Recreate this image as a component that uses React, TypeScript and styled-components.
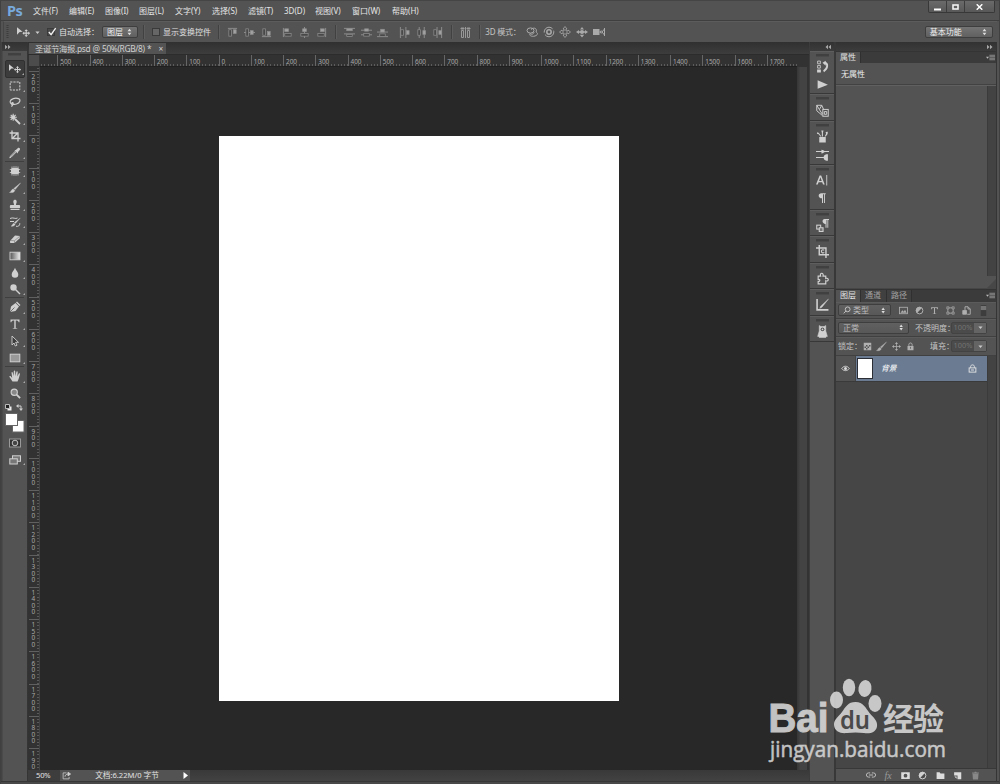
import React from "react";
import styled, { createGlobalStyle, css } from "styled-components";

const Global = createGlobalStyle`
  html, body { margin: 0; background: #535353; }
  * { box-sizing: border-box; }
  body { font-family: "Noto Sans", "Noto Sans CJK SC", sans-serif; font-size: 8px; line-height: 1; color: #dcdcdc; overflow: hidden; }
  svg { display: block; flex: none; }
`;

const Shell = styled.div`
  position: relative;
  display: flex;
  flex-direction: column;
  width: 1000px;
  height: 784px;
  background: #535353;
  border-top: 1px solid #454545;
  border-left: 1px solid #404040;
  border-right: 1px solid #404040;
  overflow: hidden;
`;

/* ---------- menu bar ---------- */
const MenuBar = styled.header`
  display: flex;
  height: 20px;
  flex: none;
  padding-left: 6px;
  align-items: center;
  border-bottom: 1px solid #3f3f3f;
`;
const Brand = styled.div`
  width: 26px;
  padding-bottom: 2px;
  color: #78a9dc;
  font: bold 14.5px/16px "Noto Sans", sans-serif;
  letter-spacing: -0.6px;
`;
const MenuItem = styled.div<{ $w: number }>`
  width: ${(p) => p.$w}px;
  white-space: nowrap;
  font-size: 8px;
  color: #e4e4e4;
`;
const WindowButtons = styled.div`
  display: flex;
  align-self: flex-start;
  margin-left: auto;
  margin-right: 4px;
  height: 12px;
  border: 1px solid #383838;
  border-top: 0;
  border-radius: 0 0 2px 2px;
  background: linear-gradient(#6a6a6a, #585858);
`;
const WindowButton = styled.div<{ $w: number }>`
  display: flex;
  align-items: center;
  justify-content: center;
  width: ${(p) => p.$w}px;
  & + & { border-left: 1px solid #3c3c3c; }
`;

/* ---------- options bar ---------- */
const OptionsBar = styled.div`
  display: flex;
  align-items: center;
  height: 21px;
  flex: none;
  border-top: 1px solid #5c5c5c;
  border-left: 1px solid #464646;
  margin: 0 2px;
  color: #e0e0e0;
`;
const Slot = styled.div<{ $w: number; $left?: boolean }>`
  display: flex;
  flex: none;
  width: ${(p) => p.$w}px;
  align-items: center;
  justify-content: ${(p) => (p.$left ? "flex-start" : "center")};
  white-space: nowrap;
`;
const ModeLabel = styled.span`
  padding-left: 1px;
  color: #c4c4c4;
  letter-spacing: -0.2px;
`;
const Divider = styled.div`
  width: 1px;
  height: 14px;
  background: #414141;
  box-shadow: 1px 0 #5d5d5d;
`;
const Check = styled.div<{ $on?: boolean }>`
  width: 8px;
  height: 8px;
  border: 1px solid #3a3a3a;
  background: ${(p) => (p.$on ? "#4a4a4a" : "#666")};
  svg { margin: -2px 0 0 -1px; }
`;
const Select = styled.div<{ $w: number; $h?: number; $dim?: boolean }>`
  display: flex;
  flex: none;
  align-items: center;
  justify-content: space-between;
  width: ${(p) => p.$w}px;
  height: ${(p) => p.$h ?? 12}px;
  padding: 0 2px 0 4px;
  border: 1px solid #3e3e3e;
  border-radius: 2px;
  background: ${(p) => (p.$dim ? "linear-gradient(#606060, #585858)" : "linear-gradient(#747474, #606060)")};
  color: ${(p) => (p.$dim ? "#bdbdbd" : "#f0f0f0")};
  white-space: nowrap;
`;
const SelectLabel = styled.span`
  display: flex;
  align-items: center;
  gap: 2px;
`;

/* ---------- work area ---------- */
const Work = styled.main`
  display: flex;
  height: 739px;
  flex: none;
`;
const ToolColumn = styled.nav`
  display: flex;
  flex-direction: column;
  width: 27px;
  border-left: 1px solid #434343;
  border-right: 1px solid #353535;
  box-shadow: inset 1px 0 #4a4a4a;
`;
const Header = styled.div<{ $right?: boolean }>`
  display: flex;
  align-items: center;
  justify-content: ${(p) => (p.$right ? "flex-end" : "flex-start")};
  height: 9px;
  flex: none;
  padding: 0 3px;
  background: linear-gradient(#323232, #3c3c3c);
`;
const Grip = styled.div`
  width: 13px;
  height: 3px;
  margin: 2px auto 0;
  flex: none;
  background: #404040;
  border-bottom: 1px solid #4a4a4a;
`;
const GripGap = styled.div`
  height: 4px;
  flex: none;
`;
const Tool = styled.div<{ $h: number; $active?: boolean }>`
  position: relative;
  display: flex;
  flex: none;
  height: ${(p) => p.$h}px;
  margin: 0 2px 0 3px;
  align-items: center;
  justify-content: center;
  ${(p) =>
    p.$active &&
    css`
      background: #3c3c3c;
      border: 1px solid #303030;
      border-radius: 2px;
    `}
`;
const Corner = styled.i`
  position: absolute;
  right: 0;
  bottom: 2px;
  border: 1px solid #aaa;
  border-top-color: transparent;
  border-left-color: transparent;
`;
const ToolRule = styled.div`
  height: 1px;
  flex: none;
  margin: 0 3px;
  background: #3f3f3f;
`;
const MiniRow = styled.div`
  display: flex;
  justify-content: space-between;
  height: 12px;
  flex: none;
  padding: 3px 4px 0 3px;
`;

/* ---------- document ---------- */
const DocColumn = styled.section`
  display: flex;
  flex-direction: column;
  width: 781px;
  background: #323232;
`;
const TabStrip = styled.div`
  display: flex;
  height: 13px;
  flex: none;
  border-bottom: 1px solid #2c2c2c;
  padding-top: 1px;
  background: linear-gradient(#303030, #3d3d3d);
`;
const DocTab = styled.div`
  display: flex;
  align-items: center;
  justify-content: space-between;
  margin-left: 1px;
  width: 137px;
  padding: 2px 3px 0 6px;
  background: #535353;
  color: #d0d0d0;
  white-space: nowrap;
  font-size: 8.4px;
  letter-spacing: -0.36px;
  word-spacing: 0.5px;
`;
const HRulerRow = styled.div`
  display: flex;
  height: 12px;
  flex: none;
  background: #323232;
`;
const RulerCorner = styled.div`
  width: 11px;
  height: 11px;
  margin-left: 1px;
  flex: none;
  background: #4c4c4c;
  border-right: 1px solid #383838;
`;
const HRuler = styled.div`
  display: flex;
  width: 757px;
  overflow: hidden;
  border-bottom: 1px solid #202020;
`;
const HCell = styled.div`
  width: 32.25px;
  flex: none;
  padding: 4px 0 0 2px;
  border-left: 1px solid #666;
  font-size: 6.4px;
  color: #a8a8a8;
  background: repeating-linear-gradient(90deg, transparent 0 2.22px, #5c5c5c 2.22px 3.22px) 0 100% / 100% 2px no-repeat;
`;
const HTrack = styled.div`
  display: flex;
  flex: none;
  margin-left: -15px;
`;
const CanvasRow = styled.div`
  display: flex;
  height: 703px;
  flex: none;
`;
const VRuler = styled.div`
  width: 12px;
  padding-left: 1px;
  overflow: hidden;
  background: #323232;
  border-right: 1px solid #424242;
`;
const VTrack = styled.div`
  margin-top: -28.5px;
`;
const VCell = styled.div`
  display: flex;
  flex-direction: column;
  height: 32.25px;
  padding: 2px 0 0 2.5px;
  border-top: 1px solid #606060;
  font-size: 6.4px;
  line-height: 6.5px;
  color: #a8a8a8;
  background: repeating-linear-gradient(180deg, transparent 0 2.22px, #5a5a5a 2.22px 3.22px) 100% 0 / 2px 100% no-repeat;
`;
const Canvas = styled.div`
  width: 757px;
  padding: 69px 0 0 179px;
  background: #282828;
`;
const Paper = styled.div`
  width: 399.5px;
  height: 565px;
  background: #fff;
`;
const VScroll = styled.div`
  flex: 1;
  background: linear-gradient(90deg, #363636, #434343 35%, #434343);
  border-right: 2px solid #333;
`;
const StatusBar = styled.footer`
  display: flex;
  height: 11px;
  flex: none;
  background: linear-gradient(#393939, #424242);
  color: #e2e2e2;
  font-size: 7.6px;
`;
const Zoom = styled.div`
  width: 32px;
  padding: 2px 0 0 8px;
  background: #3d3d3d;
  font-size: 7.6px;
  letter-spacing: -0.2px;
`;
const DocInfo = styled.div`
  display: flex;
  align-items: center;
  justify-content: space-between;
  width: 130px;
  padding: 0 2px 0 2px;
  background: #535353;
  white-space: nowrap;
`;

/* ---------- icon dock ---------- */
const Dock = styled.aside`
  display: flex;
  flex-direction: column;
  width: 27px;
  border-right: 2px solid #383838;
  border-left: 1px solid #3c3c3c;
`;
const DockGroup = styled.div<{ $h: number }>`
  height: ${(p) => p.$h}px;
  flex: none;
  border-top: 1px solid #5e5e5e;
  border-bottom: 1px solid #383838;
`;
const DockIcon = styled.div<{ $h: number }>`
  display: flex;
  height: ${(p) => p.$h}px;
  align-items: center;
  justify-content: center;
`;

/* ---------- panels ---------- */
const Panels = styled.aside`
  display: flex;
  flex-direction: column;
  width: 161px;
  border-right: 1px solid #353535;
`;
const PanelTabs = styled.div<{ $h: number }>`
  display: flex;
  height: ${(p) => p.$h}px;
  flex: none;
  background: #3b3b3b;
  border-top: 1px solid #343434;
`;
const PanelTab = styled.div<{ $w: number; $active?: boolean }>`
  display: flex;
  align-items: center;
  width: ${(p) => p.$w}px;
  padding: 0 0 1.5px 4px;
  font-size: 8px;
  background: ${(p) => (p.$active ? "#535353" : "#404040")};
  color: ${(p) => (p.$active ? "#e2e2e2" : "#a0a0a0")};
  border-right: 1px solid #303030;
`;
const TabMenu = styled.div`
  margin: 1px 1px 0 auto;
`;
const NoProps = styled.div`
  height: 22px;
  flex: none;
  padding: 6.5px 0 0 5px;
  font-size: 8px;
  color: #eee;
  border-bottom: 1px solid #424242;
`;
const PropBody = styled.div`
  display: flex;
  height: 204px;
  flex: none;
  border-top: 1px solid #606060;
  justify-content: flex-end;
  border-bottom: 1px solid #464646;
`;
const ScrollTrack = styled.div<{ $h: string }>`
  width: 9px;
  flex: none;
  height: ${(p) => p.$h};
  background: #434343;
  border-left: 1px solid #3b3b3b;
`;
const ScrollColumn = styled.div`
  display: flex;
  flex-direction: column;
`;
const LayerRow = styled.div<{ $h: number }>`
  display: flex;
  align-items: center;
  height: ${(p) => p.$h}px;
  flex: none;
  padding: 0 0 1px 2px;
  border-bottom: 1px solid #404040;
  border-top: 1px solid #5b5b5b;
  color: #c4c4c4;
`;
const FadedIcons = styled.div`
  display: flex;
  opacity: 0.75;
`;
const Percent = styled.div`
  display: flex;
  height: 12px;
  border: 1px solid #434343;
  border-radius: 2px;
  font-size: 7.4px;
  color: #737373;
  background: #4b4b4b;
`;
const PercentValue = styled.div`
  width: 22px;
  padding-top: 1px;
  text-align: center;
`;
const PercentArrow = styled.div`
  display: flex;
  align-items: center;
  justify-content: center;
  width: 12px;
  background: #646464;
`;
const LayerList = styled.div`
  display: flex;
  flex: 1;
  background: #464646;
`;
const Layers = styled.div`
  flex: 1;
`;
const Layer = styled.div`
  display: flex;
  height: 26px;
  border-bottom: 1px solid #3a3a3a;
`;
const EyeCell = styled.div`
  display: flex;
  align-items: center;
  justify-content: center;
  width: 20px;
  background: #535353;
  border-right: 1px solid #454545;
`;
const Selected = styled.div`
  display: flex;
  flex: 1;
  align-items: center;
  padding: 0 10px 0 1px;
  background: #6b7c92;
`;
const Thumb = styled.div`
  width: 16px;
  height: 21px;
  background: #fff;
  border: 1px solid #2b2f35;
`;
const LayerName = styled.div`
  flex: 1;
  padding: 1px 0 0 8px;
  color: #fff;
  font-size: 7.8px;
  font-style: italic;
`;
const LayerFooter = styled.div`
  display: flex;
  align-items: center;
  height: 13px;
  flex: none;
  padding-left: 26px;
  border-top: 1px solid #383838;
`;
const Fx = styled.i`
  color: #999;
  font: italic 10px "Liberation Serif", serif;
`;
const BottomEdge = styled.div`
  height: 3px;
  flex: none;
  background: #484848;
  border-top: 1px solid #363636;
`;
const Watermark = styled.div`
  position: absolute;
  left: 761px;
  top: 669px;
  opacity: 0.82;
`;

/* ---------- glyphs ---------- */
const F = "#d0d0d0";
const shapes: Record<string, React.ReactNode> = {
  move: (<g fill={F}><path d="M0 1.2 5.2 5.4 2.4 5.6 0 8Z" /><path d="M8.500 3l1.600 1.700H9v1.400h1.400V5l1.700 1.600-1.700 1.600V7.100H9v1.400h1.100l-1.600 1.700-1.600-1.700H8V7.100H6.600v1.100L5 6.600 6.600 5v1.100H8V4.700H6.900Z" /></g>),
  marquee: <rect x="1.200" y="2" width="9.600" height="8" fill="none" stroke={F} strokeDasharray="2.2 1" />,
  lasso: <path d="M3 8.600C0 7 .7 3.700 4.300 2.600c3.700-1.100 7.500.2 6.500 2.700C9.800 8 5.500 9 3.200 7.800c-1.200-.8.300-1.900 1-.8.500 1.200-.7 2.200-1.700 3.700" fill="none" stroke={F} strokeWidth="1.200" />,
  wand: <g stroke={F} fill="none"><path d="M6 6l5 5" strokeWidth="1.800" /><path d="M4.200.8v7M.8 4.300h7M1.700 1.800l5 5M6.700 1.800l-5 5" strokeWidth="1.100" /><circle cx="4.200" cy="4.300" r="1.500" fill={F} /></g>,
  crop: <path d="M3 .5v8h8.500M.5 3H9v8.500M4 7.800l5-5" fill="none" stroke={F} strokeWidth="1.300" />,
  dropper: <g><path d="M7.200 5 2.300 10l-1.500.8.7-1.600L6.500 4" fill="none" stroke={F} /><path d="M5.500 3.200 6.800 3 9 1c1.400-.7 2.600.8 1.800 2L9 5l-.2 1.500Z" fill={F} /></g>,
  heal: <g fill={F}><rect x="2" y="3" width="8" height="6" rx="1.500" /><path d="M3 1.500v9M5 1.200v9.600M7 1.200v9.600M9 1.500v9M.8 4.500h10.400M.8 7.500h10.400" stroke={F} strokeWidth=".8" /></g>,
  brush: <path d="M11.500 1 6.200 7.600 4.800 6.500ZM4.300 7l1.500 1.400C5.300 10.500 3 10.800.5 10.500 2.500 9.700 2 7.500 4.300 7Z" fill={F} stroke={F} strokeWidth=".4" />,
  stamp: <path d="M4.300 2.700C4.300.2 7.700.2 7.700 2.700 7.700 4 7 4.400 7 6h3.500c.7 0 .9 3 .3 3H1.200C.6 9 .8 6 1.500 6H5c0-1.600-.7-2-.7-3.300ZM1.500 9.800h9v1.200h-9Z" fill={F} />,
  history: <g><path d="M11.300 2 6.500 7.500 5.300 6.500ZM5 7.200l1.200 1C5.700 10 4 10.300 2 10.200c1.500-.7 1.300-2.500 3-3Z" fill={F} stroke={F} strokeWidth=".3" /><path d="M1 2.500C4 .8 6.500 3.500 8.500 2M7 10.200c2 .8 4-.5 3.800-3M1 5.500h4" fill="none" stroke={F} /></g>,
  eraser: <g><path d="M1 8 6 2.500 11 3 10.500 5.500 5.500 10H1.200Z" fill={F} /><path d="M1 7.500l4.500.2L11 3M5.500 7.700V10" stroke="#777" strokeWidth=".6" fill="none" /></g>,
  gradient: <><defs><linearGradient id="fade"><stop stopColor="#555" /><stop offset="1" stopColor="#eee" /></linearGradient></defs><rect x="1" y="2.200" width="10" height="7.600" fill="url(#fade)" stroke={F} strokeWidth=".9" /></>,
  drop: <path d="M6 .8C7 4 9.300 5 9.300 7.500a3.300 3.300 0 0 1-6.600 0C2.700 5 5 4 6 .8Z" fill={F} />,
  dodge: <g><circle cx="4.500" cy="4.500" r="3.200" fill={F} /><path d="M6.500 6.500 11 11" stroke={F} strokeWidth="1.400" /></g>,
  pen: <g><path d="M1 11 2 5.500 6.500 2 10 5.500 6.500 10ZM7 1.500 8 .5 11.500 4l-1 1Z" fill={F} /><path d="M1 11 5.500 6.500" stroke="#555" strokeWidth=".8" /></g>,
  type: <path d="M1.500 1.500h9v2.700h-.8C9.400 3 9 2.500 6.700 2.500v7.400l1.700.5v.4H3.600v-.4l1.700-.5V2.500c-2.300 0-2.700.5-3 1.700h-.8Z" fill={F} />,
  arrow: <path d="M3 1v9l2-2 1.300 3 1.700-.8-1.400-2.900H9.500Z" fill="#3c3c3c" stroke={F} strokeWidth=".9" />,
  rect: <rect x="1.200" y="2.200" width="9.600" height="7.600" fill="#999" stroke={F} />,
  hand: <path d="M3.500 11.500C2.300 9.500 1.500 8.500.5 7c-.5-.9.700-1.400 1.300-.7L3.200 8 2.500 2.800c0-1 1.100-1 1.300 0L4.600 6 4.800 1.300c.1-1 1.300-.9 1.400 0L6.400 6l1-4.200c.3-.9 1.400-.7 1.300.3L8.300 6.400l1.400-2.700c.5-.8 1.500-.3 1.200.6C10.200 6.500 10 9 8.500 11.500Z" fill={F} />,
  zoom: <g><circle cx="4.600" cy="4.600" r="3.400" fill="#888" stroke={F} strokeWidth="1.200" /><path d="M7.200 7.200 11 11" stroke={F} strokeWidth="2" /></g>,
  mask: <g><rect x=".5" y="2" width="11" height="8" fill="#333" stroke="#999" /><circle cx="6" cy="6" r="2.800" fill="#444" stroke={F} strokeWidth=".9" /></g>,
  screen: <g stroke={F} fill="#777"><rect x="3.500" y="1.800" width="8" height="5.500" /><rect x=".8" y="4.800" width="7.500" height="5.200" /></g>,
  play: <path d="M1.500 2 11 6.200 1.500 10Z" fill={F} />,
  histpanel: <g fill="none" stroke={F}><path d="M1.500 1H4v2.500H1.500zM1.500 5H4v2.500H1.500z" strokeWidth=".8" /><path d="M1 8.700h3.500v2.800H1zM6 2.500 9 .7v4.500Z" fill={F} stroke="none" /><path d="M8 2.500C11.500 3 11 8 7 10.500" strokeWidth="1.700" /></g>,
  styles: <g fill="none" stroke={F} strokeWidth=".9"><path d="M.7 1.200h4.600L7 5M.7 1.200v5l5 4.300M.7 1.200l5 8M5.300 1.200 3.500 4.500" /><rect x="6.300" y="5" width="5" height="6.300" /><path d="M7.700 9.500V7h2.200v2.500Z" /></g>,
  presets: <path d="M3 6.500h6v5H3ZM5.400 6V2.500L4.900.5h2l-.5 2V6ZM4 6 2.500 4 .8 3.500 1.500 1.800 3 3.300 5 6ZM8 6l1.300-2.500-.4-1.700 2-.2-.2 2L9 6Z" fill={F} />,
  brushes: <g fill={F}><path d="M0 2.800h5V1.500c2 0 2 1 3 1.300h4v1H8C7 4.200 7 5 5 5V3.800H0Z" /><path d="M0 8.200h7c.5-3 4-2.500 4-2.500v6s-3.500.5-4-2.500H0Z" /></g>,
  char: <g fill={F}><path d="M0 10.500 3.600 1.500h1.600L8.700 10.500H7L6.200 8.200H2.600L1.800 10.500Zm3.100-3.600h2.600L4.400 3.300Z" /><path d="M10.300 1h.9v10.500h-.9z" /></g>,
  para: <path d="M5.500 1.200H9.700v1H9V11h-.9V2.200H7V11H6V6.300C1.700 6.300 1.700 1.200 5.500 1.200Z" fill={F} />,
  parastyle: <g><path d="M8 0h4v1h-.7v7h-.8V1h-.8v7h-.9V4.500C5.300 4.500 5.300 0 8 0Z" fill={F} /><rect x=".7" y="5.700" width="3.600" height="3.600" fill="none" stroke={F} /><path d="M3 8h3.500v3.500H3z" fill="#777" stroke={F} /></g>,
  clone: <g fill="none" stroke={F}><path d="M3 0v9h9M0 2.700h9.200V12" strokeWidth="1.300" /><path d="M7.600 4.800C6 3.700 4.800 5 5 6c.2 1.300 1.700 1.800 2.600.8" /></g>,
  puzzle: <path d="M2 3.800h2.300C3 .3 7.500.3 6.500 3.800H9V6c3-1.200 3.200 3 0 2.200V11H2V8.700c2 .3 2-2.300 0-1.900Z" fill="none" stroke={F} strokeWidth="1.100" />,
  measure: <g><path d="M1 1v10h10.500" fill="none" stroke={F} strokeWidth="1.500" /><path d="M11.500 1 5.500 8.500 3.500 9.500 4.300 7.500Z" fill={F} stroke={F} strokeWidth=".4" /></g>,
  owl: <g><path d="M3 .5l1.500.9h3L9 .5v5l1.500 5h-1l-.5 1H3l-.5-1h-1L3 5.500Z" fill={F} stroke={F} strokeWidth=".5" /><circle cx="6" cy="4" r="1.700" fill="#555" /><circle cx="6" cy="4" r=".8" fill={F} /></g>,
  check: <path d="M2 5l2.500 3L9.500.8" fill="none" stroke="#f2f2f2" strokeWidth="1.500" />,
  updown: <path d="M.8 5 3.700 1 6.600 5ZM.8 7l2.900 4L6.600 7Z" fill="#ddd" />,
  down: <path d="M1 3.500h10L6 9.500Z" fill="#ccc" />,
  menu: <g><path d="M0 5h4L2 7.500Z" fill="#bbb" /><path d="M4.500 3H12M4.500 5H12M4.500 7H12M4.500 9H12" stroke="#8c8c8c" strokeWidth="1.300" /></g>,
  share: <g fill="none" stroke={F}><path d="M6 2.500H1.500v8h8V8" /><path d="M4 7.500C4.500 4.500 6.500 4 8.500 4" strokeWidth="1.300" /><path d="M8 1.500 11.500 4 8 6.500Z" fill={F} /></g>,
  eye: <g><path d="M1 6C3.500 2 8.500 2 11 6 8.500 9.800 3.500 9.800 1 6Z" fill="none" stroke="#ddd" strokeWidth="1.200" /><circle cx="6" cy="5.900" r="2" fill="#ddd" /></g>,
  lock: <g><rect x="2" y="5.200" width="8" height="5.800" fill={F} /><path d="M3.800 5V3.500C3.800.6 8.200.6 8.200 3.500V5" fill="none" stroke={F} strokeWidth="1.300" /><path d="M6 6.500V9" stroke="#555" /></g>,
  lockline: <g fill="none" stroke="#e6e6e6" strokeWidth="1.200"><rect x="1.500" y="5.200" width="9" height="5.600" /><path d="M3.500 5V3.500C3.500.4 8.500.4 8.500 3.500V5M4 8h4" /></g>,
  search: <g fill="none" stroke={F} strokeWidth="1.300"><circle cx="7" cy="5" r="3.600" /><path d="M4.600 7.300 1 11" /></g>,
  image: <g><rect x=".7" y="1.700" width="10.600" height="8.600" fill="none" stroke={F} strokeWidth="1.100" /><path d="M2 9l2.500-3.500 1.800 2L8 5l2.200 4Z" fill={F} /></g>,
  adjust: <g><circle cx="6" cy="6" r="4.500" fill="#4a4a4a" stroke={F} strokeWidth="1.300" /><path d="M9.200 2.800A4.500 4.500 0 0 0 2.800 9.200Z" fill={F} /></g>,
  vector: <g fill="none" stroke={F}><rect x="2.500" y="2.500" width="7" height="7" /><path d="M1 1h3v3H1zM8 1h3v3H8zM1 8h3v3H1zM8 8h3v3H8z" fill="#777" strokeWidth=".7" /></g>,
  smart: <g fill="none" stroke={F}><path d="M4 6V1h4l3 3v7H7M8 1v3h3" strokeWidth="1.200" /><path d="M1 6h5v5H1z" fill={F} /></g>,
  toggle: <g><rect x="3" y="0" width="6" height="12" fill="#3d3d3d" /><rect x="3" y="1" width="6" height="4.500" fill="#747474" /></g>,
  pixels: <path d="M1 1h10v10H1zM4 4v2h2V4zM8 4v2h2V4zM6 6v2h2V6zM2 6v2h2V6zM4 8v2h2V8z" fill={F} fillRule="evenodd" />,
  cross: <g fill={F}><path d="M6 0 8 2.600H4ZM6 12 4 9.400h4ZM0 6l2.600-2v4ZM12 6 9.400 8V4Z" /><path d="M6 2v8M2 6h8" stroke={F} /></g>,
  link: <g fill="none" stroke="#bbb" strokeWidth="1.200"><path d="M5 3.500H3a2.500 2.500 0 0 0 0 5h2M7 3.500h2a2.500 2.500 0 0 1 0 5H7M3.500 6h5" /></g>,
  addmask: <path d="M.3 1.800h11.400v8.800H.3zM6 3.700a2.500 2.500 0 1 0 0 5 2.500 2.500 0 0 0 0-5" fill="#ddd" fillRule="evenodd" />,
  folder: <path d="M.8 1.800h4L6 3.200h5.200V10.500H.8Z" fill="#ddd" />,
  newlayer: <path d="M1.500 1.500H11V11H6V6H1.500ZM1.800 7.200h3v3Z" fill="#ddd" />,
  trash: <path d="M2 3.800h8l-.6 7.500H2.600ZM1.500 2h3l.5-1h2l.5 1h3v1.200h-9Z" fill="#888" />,
  orbit: <g fill="none" stroke="#aaa"><ellipse cx="4.500" cy="4.500" rx="3.500" ry="2.600" /><path d="M5 3.500C8.500.5 11.500 3 10 6c3 1.500 1 4-2.500 4.300C4.500 10.500 3 9 4 7.500c1.500 1.500 4 .5 4-1.500" /></g>,
  roll: <g fill="none" stroke="#aaa"><circle cx="6" cy="6" r="4.800" strokeDasharray="12 2" /><circle cx="6" cy="6" r="2.200" strokeWidth="1.500" /></g>,
  pan: <path d="M6 .5 8 3H7v2h2V4l2.500 2L9 8V7H7v2h1L6 11.500 4 9h1V7H3v1L.5 6 3 4v1h2V3H4Z" fill="none" stroke="#aaa" strokeWidth=".8" />,
  slide: <g fill="#aaa"><path d="M6 1 8 3.500H4ZM6 11.500 3.800 8.800h4.400ZM0 6l3-2v1.300h6V4l3 2-3 2V6.800H3V8Z" /><circle cx="6" cy="6" r="2" /></g>,
  camera: <g fill="#aaa"><path d="M0 3h6.500v6H0ZM6.500 6 8.500 4v4Z" /><path d="M11.500 2v8M11.500 3 9 6l2.500 3" fill="none" stroke="#aaa" /></g>,
};

const Glyph = ({ n, s = 12 }: { n: string; s?: number }) => (
  <svg width={s} height={s} viewBox="0 0 12 12">{shapes[n]}</svg>
);

type Bar = [number, number, number, number, boolean?];
const alignIcons: { line: string; bars: Bar[] }[] = [
  { line: "M1 1.500h10", bars: [[2, 3, 3, 7], [7, 3, 3, 4, true]] },
  { line: "M0 6h12", bars: [[2, 2, 3, 8], [7, 4, 3, 4, true]] },
  { line: "M1 10.500h10", bars: [[2, 2, 3, 7], [7, 5, 3, 4, true]] },
  { line: "M1.500 1v10", bars: [[3, 2, 4, 3, true], [3, 7, 7, 3]] },
  { line: "M6 0v12", bars: [[4, 2, 4, 3, true], [2, 7, 8, 3]] },
  { line: "M10.500 1v10", bars: [[5, 2, 4, 3, true], [2, 7, 7, 3]] },
  { line: "M0 1.500h12M0 7.500h12", bars: [[3, 2, 6, 2, true], [3, 8, 6, 2.5]] },
  { line: "M0 3.500h12M0 8.500h12", bars: [[4, 2, 4, 2.5, true], [3, 7, 6, 3]] },
  { line: "M0 5.500h12M0 10.500h12", bars: [[4, 2.5, 4, 3, true], [3, 7.5, 6, 3]] },
  { line: "M1.500 0v12M7.500 0v12", bars: [[2, 3, 3, 6], [8, 4, 3, 4, true]] },
  { line: "M3.500 0v12M9 0v12", bars: [[2, 3, 3, 6], [7.5, 4, 3, 4, true]] },
  { line: "M5.500 0v12M10.500 0v12", bars: [[2, 3, 3, 6], [7.5, 4, 3, 4, true]] },
];
const AlignGlyph = ({ i }: { i: number }) => (
  <svg width="11" height="11" viewBox="0 0 12 12">
    <path d={alignIcons[i].line} stroke="#909090" fill="none" />
    {alignIcons[i].bars.map(([x, y, w, h, solid], k) => (
      <rect key={k} x={x} y={y} width={w} height={h} fill={solid ? "#a2a2a2" : "#484848"} stroke="#8e8e8e" strokeWidth=".8" />
    ))}
  </svg>
);
const Chevrons = ({ left }: { left?: boolean }) => (
  <svg width="6" height="6" viewBox="0 0 6 6">
    <path d={left ? "M3 .8v4.400L.5 3ZM6 .8v4.400L3.500 3Z" : "M0 .8v4.400L2.500 3ZM3 .8v4.400L5.500 3Z"} fill="#a8a8a8" />
  </svg>
);

/* ---------- data ---------- */
const menus: [string, number][] = [
  ["文件(F)", 36], ["编辑(E)", 36], ["图像(I)", 34], ["图层(L)", 36], ["文字(Y)", 37], ["选择(S)", 36],
  ["滤镜(T)", 36], ["3D(D)", 31], ["视图(V)", 37], ["窗口(W)", 40], ["帮助(H)", 40],
];
const toolGroups: [string, number][][] = [
  [["marquee", 16], ["lasso", 16], ["wand", 17], ["crop", 17], ["dropper", 17]],
  [["heal", 17], ["brush", 17], ["stamp", 17], ["history", 17], ["eraser", 17], ["gradient", 17], ["drop", 17], ["dodge", 16]],
  [["pen", 18], ["type", 16], ["arrow", 17], ["rect", 17]],
  [["hand", 18], ["zoom", 16]],
];
const dock: [number, [string, number][]][] = [
  [43, [["histpanel", 18], ["play", 18]]],
  [27, [["styles", 20]]],
  [44, [["presets", 18], ["brushes", 18]]],
  [45, [["char", 18], ["para", 18]]],
  [26, [["parastyle", 19]]],
  [27, [["clone", 19]]],
  [26, [["puzzle", 19]]],
  [27, [["measure", 19]]],
  [26, [["owl", 19]]],
];
/* The first cell of each ruler starts outside the view and carries no label. */
const hMarks = Array.from({ length: 24 }, (_, i) => (i === 0 ? "" : String(Math.abs(i - 6) * 100)));
const vMarks = Array.from({ length: 23 }, (_, i) =>
  i === 0 ? "" : i === 22 ? "190" : String(Math.abs(i - 3) * 100)
);

const Swatches = () => (
  <svg width="20" height="20" viewBox="0 0 20 20">
    <rect x="7.500" y="7.500" width="11.500" height="11.500" fill="#fff" stroke="#666" />
    <rect x=".5" y=".5" width="12" height="12" fill="#fff" stroke="#666" />
  </svg>
);

export default function App() {
  return (
    <Shell>
      <Global />
      <MenuBar>
        <Brand>Ps</Brand>
        {menus.map(([t, w]) => <MenuItem key={t} $w={w}>{t}</MenuItem>)}
        <WindowButtons>
          <WindowButton $w={17}><svg width="7" height="8"><path d="M0 6.500h7" stroke="#fff" strokeWidth="2" /></svg></WindowButton>
          <WindowButton $w={18}><svg width="7" height="6"><rect x="1" y="1" width="5" height="4" fill="none" stroke="#f2f2f2" strokeWidth="1.600" /></svg></WindowButton>
          <WindowButton $w={30}><svg width="7" height="6"><path d="M.7.3 6.300 5.700M6.300.3.7 5.700" stroke="#fff" strokeWidth="1.500" /></svg></WindowButton>
        </WindowButtons>
      </MenuBar>

      <OptionsBar>
        <Slot $w={12} $left><svg width="6" height="14"><path d="M3.500 0v14" stroke="#3d3d3d" strokeWidth="2" strokeDasharray="1 1" /></svg></Slot>
        <Slot $w={15}><Glyph n="move" s={13} /></Slot>
        <Slot $w={12}><Glyph n="down" s={5} /></Slot>
        <Slot $w={16}><Check $on><svg width="10" height="9" viewBox="0 0 11 9">{shapes.check}</svg></Check></Slot>
        <Slot $w={43} $left>自动选择：</Slot>
        <Select $w={36}><span>图层</span><Glyph n="updown" s={8} /></Select>
        <Slot $w={10}><Divider /></Slot>
        <Slot $w={15}><Check /></Slot>
        <Slot $w={51} $left>显示变换控件</Slot>
        <Slot $w={9}><Divider /></Slot>
        <Slot $w={1.5} />
        {[0, 1, 2].map((i) => <Slot key={i} $w={16.7}><AlignGlyph i={i} /></Slot>)}
        <Slot $w={5} />
        {[3, 4, 5].map((i) => <Slot key={i} $w={16.7}><AlignGlyph i={i} /></Slot>)}
        <Slot $w={11.5}><Divider /></Slot>
        {[6, 7, 8].map((i) => <Slot key={i} $w={16.7}><AlignGlyph i={i} /></Slot>)}
        <Slot $w={5} />
        {[9, 10, 11].map((i) => <Slot key={i} $w={16.7}><AlignGlyph i={i} /></Slot>)}
        <Slot $w={10}><Divider /></Slot>
        <Slot $w={18}>
          <svg width="11" height="11" fill="none" stroke="#999"><path d="M1 1h3v1H1zM7 1h3v1H7z" fill="#999" /><path d="M1.500 3.500h2v7h-2zM7.500 3.500h2v7h-2zM5.500 0v11" /></svg>
        </Slot>
        <Slot $w={10}><Divider /></Slot>
        <Slot $w={39} $left><ModeLabel>3D 模式：</ModeLabel></Slot>
        {["orbit", "roll", "pan", "slide", "camera"].map((n) => <Slot key={n} $w={16.9}><Glyph n={n} /></Slot>)}
        <Slot $w={317} />
        <Select $w={68}><span>基本功能</span><Glyph n="updown" s={8} /></Select>
      </OptionsBar>

      <Work>
        <ToolColumn>
          <Header><Chevrons /></Header>
          <Grip />
          <GripGap />
          <Tool $h={18} $active><Glyph n="move" /><Corner /></Tool>
          {toolGroups.map((group, gi) => (
            <React.Fragment key={gi}>
              {gi > 0 && <ToolRule />}
              {group.map(([n, h]) => <Tool key={n} $h={h}><Glyph n={n} s={n === "zoom" ? 11 : 12} />{n !== "zoom" && <Corner />}</Tool>)}
            </React.Fragment>
          ))}
          <MiniRow>
            <svg width="7" height="7"><path d="M2.500 2.500h4v4h-4z" fill="#eee" /><path d="M.5.5h4v4h-4z" fill="#222" stroke="#bbb" /></svg>
            <svg width="7" height="7"><path d="M1.500 2h3.500v3" fill="none" stroke="#ccc" /><path d="M2.500 0v4L0 2ZM3 4.500h4L5 7Z" fill="#ccc" /></svg>
          </MiniRow>
          <Tool $h={20}><Swatches /></Tool>
          <Tool $h={19}><Glyph n="mask" /></Tool>
          <Tool $h={15}><Glyph n="screen" /><Corner /></Tool>
        </ToolColumn>

        <DocColumn>
          <TabStrip>
            <DocTab><span>圣诞节海报.psd @ 50%(RGB/8) *</span><span>×</span></DocTab>
          </TabStrip>
          <HRulerRow>
            <RulerCorner />
            <HRuler><HTrack>{hMarks.map((v, i) => <HCell key={i}>{v}</HCell>)}</HTrack></HRuler>
          </HRulerRow>
          <CanvasRow>
            <VRuler>
              <VTrack>
                {vMarks.map((v, i) => (
                  <VCell key={i}>{v.split("").map((d, k) => <span key={k}>{d}</span>)}</VCell>
                ))}
              </VTrack>
            </VRuler>
            <Canvas><Paper /></Canvas>
            <VScroll />
          </CanvasRow>
          <StatusBar>
            <Zoom>50%</Zoom>
            <DocInfo><Glyph n="share" s={9} /><span>文档:6.22M/0 字节</span><svg width="5" height="7"><path d="M.5 0 5 3.500.5 7Z" fill="#fff" /></svg></DocInfo>
          </StatusBar>
        </DocColumn>

        <Dock>
          <Header $right><Chevrons left /></Header>
          {dock.map(([h, icons], i) => (
            <DockGroup key={i} $h={h}>
              <Grip />
              {icons.map(([n, ih]) => <DockIcon key={n} $h={ih}><Glyph n={n} s={n === "char" || n === "para" ? 12 : 13} /></DockIcon>)}
            </DockGroup>
          ))}
        </Dock>

        <Panels>
          <Header $right><Chevrons /></Header>
          <PanelTabs $h={12}>
            <PanelTab $w={25} $active>属性</PanelTab>
            <TabMenu><Glyph n="menu" s={9} /></TabMenu>
          </PanelTabs>
          <NoProps>无属性</NoProps>
          <PropBody>
            <ScrollColumn>
              <ScrollTrack $h="190px" />
              <svg width="9" height="12"><path d="M9 3v9H0Z" fill="#474747" /></svg>
            </ScrollColumn>
          </PropBody>
          <PanelTabs $h={13}>
            <PanelTab $w={25} $active>图层</PanelTab>
            <PanelTab $w={26}>通道</PanelTab>
            <PanelTab $w={25}>路径</PanelTab>
            <TabMenu><Glyph n="menu" s={9} /></TabMenu>
          </PanelTabs>
          <LayerRow $h={17}>
            <Select $w={53} $dim><SelectLabel><Glyph n="search" s={8} />类型</SelectLabel><Glyph n="updown" s={7} /></Select>
            <Slot $w={5} />
            <FadedIcons>
              {["image", "adjust", "type", "vector", "smart"].map((n) => <Slot key={n} $w={15.6}><Glyph n={n} s={9} /></Slot>)}
            </FadedIcons>
            <Slot $w={19}><Glyph n="toggle" s={11} /></Slot>
          </LayerRow>
          <LayerRow $h={18}>
            <Select $w={71} $dim><span>正常</span><Glyph n="updown" s={7} /></Select>
            <Slot $w={6} />
            <Slot $w={36} $left>不透明度：</Slot>
            <Percent><PercentValue>100%</PercentValue><PercentArrow><Glyph n="down" s={5} /></PercentArrow></Percent>
          </LayerRow>
          <LayerRow $h={19}>
            <Slot $w={22} $left>锁定：</Slot>
            <FadedIcons>
              {["pixels", "brush", "cross", "lock"].map((n) => <Slot key={n} $w={14.5}><Glyph n={n} s={n === "brush" ? 11 : 9} /></Slot>)}
            </FadedIcons>
            <Slot $w={12} />
            <Slot $w={21} $left>填充：</Slot>
            <Percent><PercentValue>100%</PercentValue><PercentArrow><Glyph n="down" s={5} /></PercentArrow></Percent>
          </LayerRow>
          <LayerList>
            <Layers>
              <Layer>
                <EyeCell><Glyph n="eye" s={9} /></EyeCell>
                <Selected><Thumb /><LayerName>背景</LayerName><Glyph n="lockline" s={9} /></Selected>
              </Layer>
            </Layers>
            <ScrollTrack $h="100%" />
          </LayerList>
          <LayerFooter>
            <Slot $w={17.4}><Glyph n="link" s={10} /></Slot>
            <Slot $w={17.4}><Fx>fx</Fx></Slot>
            {["addmask", "adjust", "folder", "newlayer", "trash"].map((n) => <Slot key={n} $w={17.4}><Glyph n={n} s={9} /></Slot>)}
          </LayerFooter>
        </Panels>
      </Work>
      <BottomEdge />

      <Watermark>
        <svg width="192" height="96" viewBox="0 0 192 96" fill="#e4e4e4">
          <text x="6.500" y="62" fontFamily="Liberation Sans, sans-serif" fontWeight="bold" fontSize="40" textLength="60" lengthAdjust="spacingAndGlyphs" stroke="#e4e4e4" strokeWidth="1">Bai</text>
          <ellipse cx="74.500" cy="30" rx="6.500" ry="8.500" />
          <ellipse cx="87" cy="17.500" rx="6.200" ry="8.800" />
          <ellipse cx="103" cy="18.500" rx="6.500" ry="8.500" transform="rotate(10 103 18.500)" />
          <ellipse cx="113" cy="33.500" rx="6.500" ry="8.500" />
          <path d="M93.500 32c8 0 10 6 14 11 4 4.500 8.500 8 7.500 13.500-1 6-7 7.500-13 6.500-6-.8-11-.8-17 0-6.500.8-12.500-1.500-13-8-.3-5.500 4.500-8.500 8-13 3.500-5 6-10 13.500-10Z" />
          <text x="78" y="59" fontFamily="Noto Sans, sans-serif" fontWeight="600" fontSize="25" textLength="30" lengthAdjust="spacingAndGlyphs" fill="#4b4b4b">du</text>
          <text x="121" y="60" fontFamily="Noto Sans CJK SC, sans-serif" fontWeight="bold" fontSize="31" textLength="61">经验</text>
          <text x="8" y="87" fontFamily="Open Sans, sans-serif" fontSize="22" textLength="176" lengthAdjust="spacingAndGlyphs" stroke="#e4e4e4" strokeWidth=".5">jingyan.baidu.com</text>
        </svg>
      </Watermark>
    </Shell>
  );
}
